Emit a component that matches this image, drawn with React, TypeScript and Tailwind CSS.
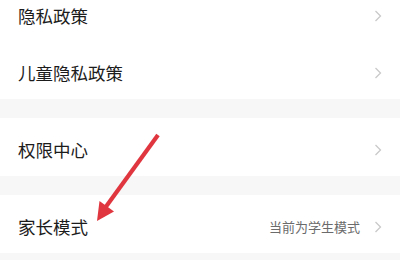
import React from 'react';

const CJK = { fontFamily: '"Noto Sans CJK SC", "Noto Sans", sans-serif' };

const Chevron: React.FC = () => (
  <svg width="8" height="12" viewBox="0 0 8 12" className="shrink-0">
    <path d="M1.5 1 L6.5 6 L1.5 11" fill="none" stroke="#c9c9c9" strokeWidth="1.3" />
  </svg>
);

type RowProps = { label: string; value?: string; h: string };

const Row: React.FC<RowProps> = ({ label, value, h }) => (
  <div className={`${h} bg-white flex items-center pl-[18px] pr-[18px] pt-[5px]`}>
    <span className="text-[17.5px] text-[#1c1c1c] leading-none flex-1">{label}</span>
    {value && <span className="text-[13px] text-[#6b6b6b] mr-[14px] leading-none">{value}</span>}
    <Chevron />
  </div>
);

const App: React.FC = () => {
  return (
    <div className="relative w-[400px] h-[260px] overflow-hidden bg-[#f7f7f7]" style={CJK}>
      <div className="-mt-[15px] flex flex-col">
        <Row label="隐私政策" h="h-[57px]" />
        <Row label="儿童隐私政策" h="h-[57px]" />
        <div className="h-[19px]" />
        <Row label="权限中心" h="h-[58px]" />
        <div className="h-[19px]" />
        <Row label="家长模式" value="当前为学生模式" h="h-[58px]" />
      </div>

      {/* red annotation arrow */}
      <svg className="absolute top-0 left-0 pointer-events-none" width="400" height="260" viewBox="0 0 400 260">
        <line x1="158" y1="135" x2="105" y2="208" stroke="#e0363f" strokeWidth="4.2" strokeLinecap="butt" />
        <polygon points="97,221 99.5,201 114,211.5" fill="#e0363f" />
      </svg>
    </div>
  );
};

export default App;
